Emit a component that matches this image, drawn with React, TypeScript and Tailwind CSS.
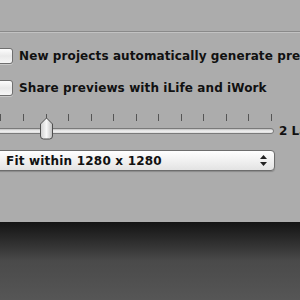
const ticks = [0, 23, 46, 68, 91, 113, 136, 158, 181, 203, 226, 248, 271]

const Checkbox = () => (
  <div className="ml-[-3px] h-[16px] w-[16px] shrink-0 rounded-[3px] border border-[#6f6f6f] bg-gradient-to-b from-[#fdfdfd] via-[#e9e9e9] to-[#f6f6f6] shadow-[0_1px_0_rgba(255,255,255,0.35)]" />
)

const CheckRow = ({ label }: { label: string }) => (
  <div className="flex items-center gap-[6px] whitespace-nowrap">
    <Checkbox />
    <span className="text-[12px] font-bold leading-none tracking-[0.1px] text-[#111]">
      {label}
    </span>
  </div>
)

export default function App() {
  return (
    <div
      className="flex h-[300px] w-[300px] flex-col overflow-hidden bg-[#555]"
      style={{ fontFamily: '"DejaVu Sans", "Liberation Sans", sans-serif' }}
    >
      <div className="flex h-[222px] shrink-0 flex-col bg-[#acacac]">
        <div className="h-[31px] shrink-0" />
        <div className="h-px bg-[#8a8a8a]" />
        <div className="h-px bg-[#c2c2c2]" />

        <div className="mt-[15px] flex flex-col gap-[16px]">
          <CheckRow label="New projects automatically generate previews" />
          <CheckRow label="Share previews with iLife and iWork" />
        </div>

        {/* slider */}
        <div className="mt-[18px] flex items-start">
          <div className="relative h-[26px] w-[275px] shrink-0">
            {ticks.map((x) => (
              <div
                key={x}
                className="absolute top-0 h-[7px] w-px bg-[#555]"
                style={{ left: x }}
              />
            ))}
            <div className="absolute left-[-4px] top-[14px] h-[6px] w-[278px] rounded-r-full border border-[#7a7a7a] bg-gradient-to-b from-[#bdbdbd] via-[#f2f2f2] to-[#dcdcdc]" />
            <svg
              className="absolute left-[39px] top-[3px]"
              width="15"
              height="23"
              viewBox="0 0 15 23"
            >
              <defs>
                <linearGradient id="knob" x1="0" y1="0" x2="1" y2="0">
                  <stop offset="0" stopColor="#cfcfcf" />
                  <stop offset="0.5" stopColor="#f7f7f7" />
                  <stop offset="1" stopColor="#bdbdbd" />
                </linearGradient>
              </defs>
              <path
                d="M7.5 1 L13.5 7 V19 Q13.5 22 10.5 22 H4.5 Q1.5 22 1.5 19 V7 Z"
                fill="url(#knob)"
                stroke="#4f4f4f"
                strokeWidth="1"
              />
            </svg>
          </div>
          <span className="ml-[4px] mt-[11px] whitespace-nowrap text-[12px] font-bold leading-none text-[#111]">
            2 Large
          </span>
        </div>

        {/* popup button */}
        <div className="ml-[-4px] mt-[10px] flex h-[21px] w-[279px] items-center justify-between rounded-r-[4px] border border-[#6d6d6d] bg-gradient-to-b from-[#ffffff] via-[#f1f1f1] to-[#e3e3e3] pl-[9px] pr-[7px] shadow-[0_1px_1px_rgba(0,0,0,0.2)]">
          <span className="whitespace-nowrap text-[12px] font-bold leading-none tracking-[0.2px] text-[#111]">
            Fit within 1280 x 1280
          </span>
          <svg width="7" height="11" viewBox="0 0 7 11">
            <path d="M3.5 0 L7 4 H0 Z" fill="#222" />
            <path d="M3.5 11 L7 7 H0 Z" fill="#222" />
          </svg>
        </div>
      </div>
      <div className="flex-1 bg-gradient-to-b from-[#141414] via-[#4a4a4a] to-[#565656]" />
    </div>
  )
}
